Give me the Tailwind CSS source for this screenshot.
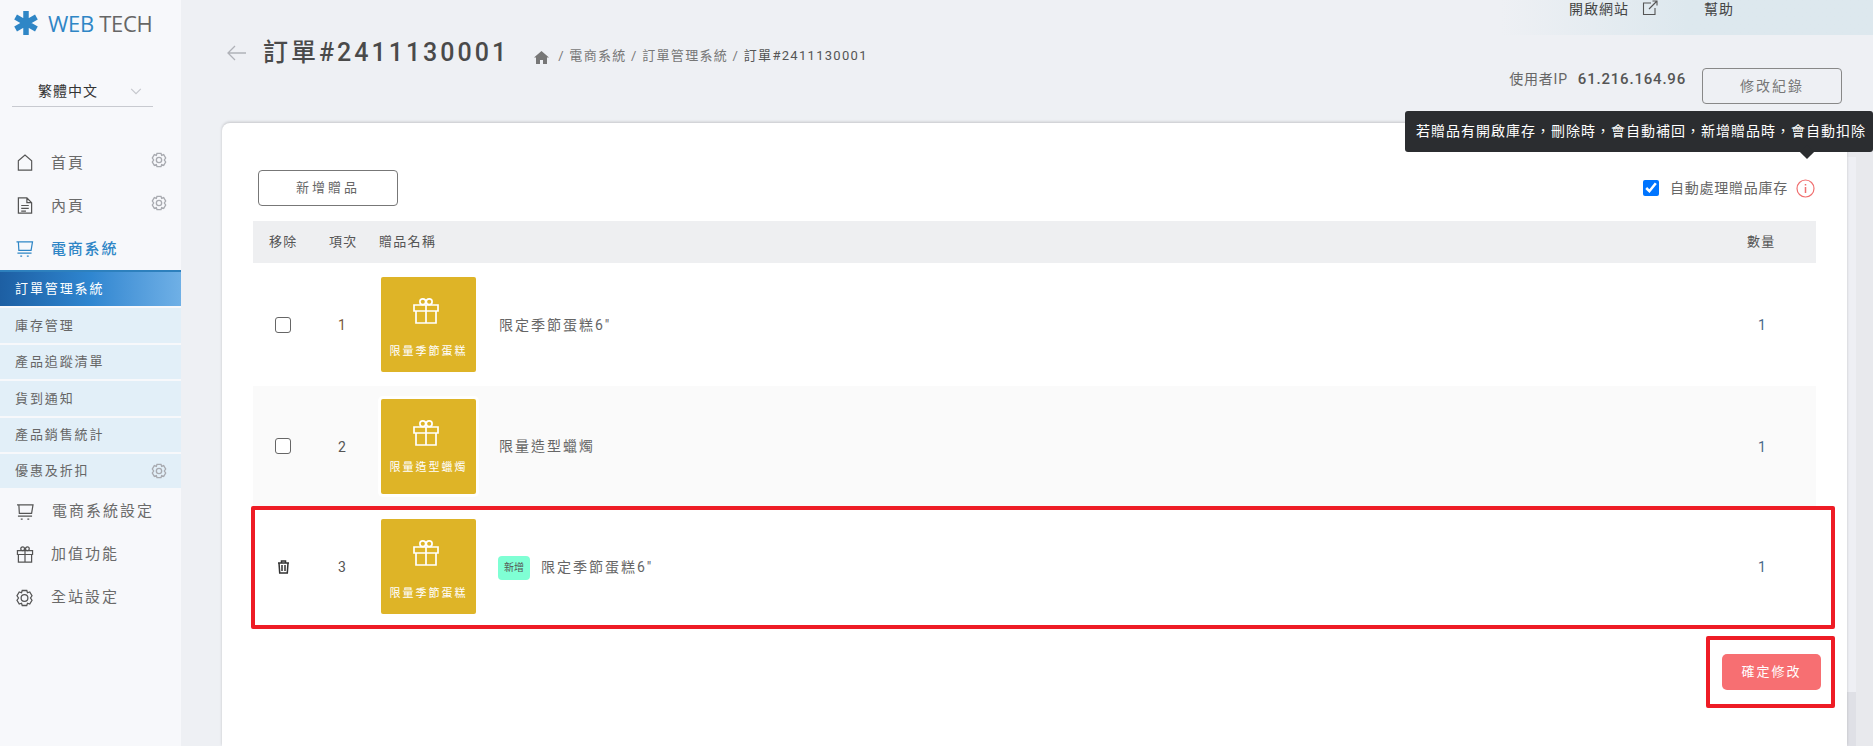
<!DOCTYPE html>
<html lang="zh-Hant">
<head>
<meta charset="utf-8">
<script src="https://cdn.jsdelivr.net/npm/@tailwindcss/browser@4"></script>
</head>
<body class="m-0 h-[746px] w-[1873px] overflow-hidden bg-[#eef0f4] text-[#555] font-['Roboto','Noto_Sans_CJK_TC',sans-serif]">
<div class="flex h-[746px] w-[1873px]">
  <!-- sidebar -->
  <aside class="w-[181px] h-full shrink-0 bg-[#f7f8fb] flex flex-col">
    <div class="h-[46px] pt-[11px] pl-[14px] flex items-start gap-[10px]">
      <svg class="w-[24px] h-[24px]" viewBox="0 0 24 24"><g stroke="#2f86c6" stroke-width="5.500"><path d="M12 0V24M1.600 6L22.400 18M1.600 18L22.400 6"/></g></svg>
      <div class="text-[22px] leading-[24px] font-['Open_Sans',sans-serif] tracking-[-0.3px] whitespace-nowrap"><span class="text-[#2f86c6]">WEB</span> <span class="text-[#666]">TECH</span></div>
    </div>
    <div class="mx-[12px] mt-[29px] h-[32px] border-b border-[#c8cad0] flex items-start justify-between pl-[26px] pr-[11px] w-[141px] pt-[6px]">
      <span class="text-[14px] leading-[20px] tracking-[1px] text-[#333]">繁體中文</span>
      <svg class="w-[12px] h-[7px] mt-[7px]" viewBox="0 0 13 8" fill="none" stroke="#c5c7cc" stroke-width="1.300"><path d="M1 1l5.500 5.500L12 1"/></svg>
    </div>
    <nav class="mt-[35px] flex flex-col">
      <a class="h-[43px] flex items-center pl-[17px] text-[15px] tracking-[2px] text-[#6a6a6a]"><svg class="w-[16px] h-[17px] mr-[18px] -mt-[2px]" viewBox="0 0 18 19" fill="none" stroke="#555" stroke-width="1.300"><path d="M1.500 7.500L9 1l7.500 6.500V18h-15z"/></svg><span class="flex-1">首頁</span><svg class="w-[16px] h-[16px] mr-[14px] -mt-[8px]" viewBox="0 0 24 24" fill="none" stroke="#a8aab0" stroke-width="2"><circle cx="12" cy="12" r="4"/><path d="M9 2h6l1 3 3-1 3 5-2 3 2 3-3 5-3-1-1 3H9l-1-3-3 1-3-5 2-3-2-3 3-5 3 1z"/></svg></a>
      <a class="h-[43px] flex items-center pl-[17px] text-[15px] tracking-[2px] text-[#6a6a6a]"><svg class="w-[16px] h-[17px] mr-[18px] -mt-[2px]" viewBox="0 0 16 18" fill="none" stroke="#555" stroke-width="1.300"><path d="M1 1h9l5 5v11H1zM10 1v5h5M4 9h8M4 12h8M4 15h5"/></svg><span class="flex-1">內頁</span><svg class="w-[16px] h-[16px] mr-[14px] -mt-[8px]" viewBox="0 0 24 24" fill="none" stroke="#a8aab0" stroke-width="2"><circle cx="12" cy="12" r="4"/><path d="M9 2h6l1 3 3-1 3 5-2 3 2 3-3 5-3-1-1 3H9l-1-3-3 1-3-5 2-3-2-3 3-5 3 1z"/></svg></a>
      <a class="h-[43px] flex items-center pl-[15px] text-[15px] tracking-[1.800px] font-medium text-[#2f86c6]"><svg class="w-[19px] h-[16px] mr-[17px] -mt-[2px]" viewBox="0 0 19 17" fill="none" stroke="#2f86c6" stroke-width="1.300"><path d="M1 1h17l-1.500 9H3.500L3 1M2 13h15M5 16h2M12 16h2"/></svg><span>電商系統</span></a>
      <a class="h-[36px] -mt-[1px] flex items-center pl-[15px] text-[13px] tracking-[1.900px] text-white border-t-2 border-[#2d80bd] bg-gradient-to-r from-[#1d5fa3] via-[#2f86d0] to-[#6fb0e6]">訂單管理系統</a>
      <a class="h-[35px] mt-[2px] flex items-center pl-[15px] text-[13px] tracking-[1.900px] text-[#666] bg-[#e2eff8]">庫存管理</a>
      <a class="h-[34px] mt-[2px] flex items-center pl-[15px] text-[13px] tracking-[1.900px] text-[#666] bg-[#e2eff8]">產品追蹤清單</a>
      <a class="h-[35px] mt-[2px] flex items-center pl-[15px] text-[13px] tracking-[1.900px] text-[#666] bg-[#e2eff8]">貨到通知</a>
      <a class="h-[34px] mt-[2px] flex items-center pl-[15px] text-[13px] tracking-[1.900px] text-[#666] bg-[#e2eff8]">產品銷售統計</a>
      <a class="h-[34px] mt-[2px] flex items-center pl-[15px] text-[13px] tracking-[1.900px] text-[#666] bg-[#e2eff8]"><span class="flex-1">優惠及折扣</span><svg class="w-[16px] h-[16px] mr-[14px]" viewBox="0 0 24 24" fill="none" stroke="#a8aab0" stroke-width="2"><circle cx="12" cy="12" r="4"/><path d="M9 2h6l1 3 3-1 3 5-2 3 2 3-3 5-3-1-1 3H9l-1-3-3 1-3-5 2-3-2-3 3-5 3 1z"/></svg></a>
      <a class="h-[43px] mt-[2px] flex items-center pl-[16px] text-[15px] tracking-[2px] text-[#6a6a6a]"><svg class="w-[18px] h-[16px] mr-[18px]" viewBox="0 0 19 17" fill="none" stroke="#555" stroke-width="1.300"><path d="M1 1h17l-1.500 9H3.500L3 1M2 13h15M5 16h2M12 16h2"/></svg><span>電商系統設定</span></a>
      <a class="h-[43px] flex items-center pl-[16px] text-[15px] tracking-[2px] text-[#6a6a6a]"><svg class="w-[18px] h-[17px] mr-[17px]" viewBox="0 0 18 18" fill="none" stroke="#555" stroke-width="1.300"><path d="M1 5h16v4H1zM2 9v8h14V9M9 5v12"/><circle cx="6.500" cy="3" r="2"/><circle cx="11.500" cy="3" r="2"/></svg><span>加值功能</span></a>
      <a class="h-[43px] flex items-center pl-[15px] text-[15px] tracking-[2px] text-[#6a6a6a]"><svg class="w-[19px] h-[18px] mr-[17px]" viewBox="0 0 24 24" fill="none" stroke="#555" stroke-width="1.700"><circle cx="12" cy="12" r="4.500"/><path d="M9 2h6l1 3 3-1 3 5-2 3 2 3-3 5-3-1-1 3H9l-1-3-3 1-3-5 2-3-2-3 3-5 3 1z"/></svg><span>全站設定</span></a>
    </nav>
  </aside>
  <!-- main -->
  <main class="flex-1 relative min-w-0">
    <div class="absolute right-0 top-0 w-[372px] h-[35px] bg-gradient-to-r from-[#eef0f4] via-[#dde8ee] to-[#dde8ee]"></div>
    <div class="relative flex items-start h-[123px]">
      <div class="flex items-center pl-[46px] pt-[41px] h-[65px]">
        <svg class="w-[20px] h-[16px] mr-[16px]" viewBox="0 0 20 16" fill="none" stroke="#b0b2b8" stroke-width="1.300"><path d="M19 8H1M8 1L1 8l7 7"/></svg>
        <h1 class="text-[25px] leading-[28px] font-medium tracking-[3px] text-[#4a4a4a] m-0 whitespace-nowrap">訂單#2411130001</h1>
        <div class="ml-[25px] mt-[5px] flex items-center text-[13px] tracking-[1.300px] text-[#777] whitespace-nowrap">
          <svg class="w-[15px] h-[13px] mr-[9px] mt-[3px]" viewBox="0 0 15 13" fill="#777"><path d="M7.500 0L0 6.500h2V13h4V9h3v4h4V6.500h2z"/></svg>
          <span>/ 電商系統 / 訂單管理系統 / <span class="text-[#555]">訂單#2411130001</span></span>
        </div>
      </div>
      <div class="ml-auto mr-[139px] flex text-[14px] leading-[18px] tracking-[1px] text-[#444] items-start">
        <span class="flex items-center">開啟網站<svg class="w-[16px] h-[16px] ml-[13px] -mt-[2px]" viewBox="0 0 16 16" fill="none" stroke="#555" stroke-width="1.100"><path d="M9 3H1.500v11.500H13V8M7 9l8-8M10.500 1H15v4.500"/></svg></span>
        <span class="ml-[46px]">幫助</span>
      </div>
      <div class="absolute right-[31px] top-[68px] flex items-center">
        <span class="text-[14px] tracking-[0.8px] text-[#666] mr-[10px] -mt-[14px]">使用者IP</span>
        <span class="text-[15px] font-medium tracking-[0.8px] text-[#555] mr-[16px] -mt-[14px]">61.216.164.96</span>
        <button class="w-[140px] h-[36px] rounded-[4px] border border-[#888] text-[14px] tracking-[2px] text-[#777]">修改紀錄</button>
      </div>
    </div>
    <!-- scrollbar strip -->
    <div class="absolute left-[1666px] top-[123px] w-[26px] h-[623px] bg-[#e8e9ed] flex flex-col">
      <div class="w-[9px] h-[34px] bg-[#e8e9ed]"></div>
      <div class="w-[9px] h-[535px] bg-[#eeeff4]"></div>
      <div class="w-[9px] flex-1 bg-[#dfe0e6]"></div>
    </div>
    <section class="absolute left-[41px] top-[123px] w-[1625px] h-[623px] bg-white rounded-tl-[8px] shadow-[0_-1px_3px_rgba(0,0,0,0.18)]">
      <div class="pl-[36px] pr-[33px] pt-[47px]">
        <div class="flex items-center justify-between h-[36px]">
          <button class="w-[140px] h-[36px] rounded-[4px] border border-[#777] text-[13px] tracking-[3px] text-[#666]">新增贈品</button>
          <div class="flex items-center -mr-[1px]">
            <input type="checkbox" checked class="w-[16px] h-[16px] accent-[#0075ff] mr-[11px]">
            <span class="text-[14px] tracking-[0.750px] text-[#666] mr-[8px]">自動處理贈品庫存</span>
            <svg class="w-[19px] h-[19px]" viewBox="0 0 19 19" fill="none" stroke="#f07070" stroke-width="1.200"><circle cx="9.500" cy="9.500" r="8.500"/><path d="M9.500 8v6M9.500 5v1.500" stroke-width="1.500"/></svg>
          </div>
        </div>
        <div class="mt-[15px] w-[1563px] -ml-[5px]">
          <div class="h-[42px] bg-[#eeeff1] flex items-center text-[13px] tracking-[1.300px] text-[#555]">
            <span class="w-[74px] pl-[16px]">移除</span><span class="w-[50px] pl-[2px]">項次</span><span class="flex-1 pl-[2px]">贈品名稱</span><span class="w-[69px]">數量</span>
          </div>
          <!-- row 1 -->
          <div class="h-[123px] flex items-center text-[14px]">
            <div class="w-[60px] pl-[22px]"><div class="w-[16px] h-[16px] rounded-[3px] border border-[#666] bg-white"></div></div>
            <div class="w-[38px] ml-[10px] mt-[2px] text-center text-[14px] text-[#7a5a3a]">1</div>
            <div class="ml-[20px] w-[95px] h-[95px] rounded-[2px] bg-[#deb427] flex flex-col items-center text-white">
              <svg class="w-[26px] h-[26px] mt-[21px] mr-[5px]" viewBox="0 0 26 26" fill="none" stroke="#fff" stroke-width="1.700"><path d="M1 7h24v6H1zM3 13v12h20V13M13 7v18"/><circle cx="9.800" cy="3.800" r="2.900"/><circle cx="16.200" cy="3.800" r="2.900"/></svg>
              <span class="mt-[20px] text-[11px] tracking-[2px] leading-[16px] whitespace-nowrap">限量季節蛋糕</span>
            </div>
            <div class="ml-[23px] mt-[1px] flex-1 text-[#666] tracking-[2px]">限定季節蛋糕6"</div>
            <div class="w-[58px] mt-[2px] -ml-[1px] text-[#4a6a8a]">1</div>
          </div>
          <!-- row 2 -->
          <div class="h-[120px] flex items-center text-[14px] bg-[#fafafa]">
            <div class="w-[60px] pl-[22px]"><div class="w-[16px] h-[16px] rounded-[3px] border border-[#666] bg-white"></div></div>
            <div class="w-[38px] ml-[10px] mt-[2px] text-center text-[14px] text-[#555]">2</div>
            <div class="ml-[20px] w-[95px] h-[95px] rounded-[2px] bg-[#deb427] flex flex-col items-center text-white ring-[3px] ring-white">
              <svg class="w-[26px] h-[26px] mt-[21px] mr-[5px]" viewBox="0 0 26 26" fill="none" stroke="#fff" stroke-width="1.700"><path d="M1 7h24v6H1zM3 13v12h20V13M13 7v18"/><circle cx="9.800" cy="3.800" r="2.900"/><circle cx="16.200" cy="3.800" r="2.900"/></svg>
              <span class="mt-[14px] text-[11px] tracking-[2px] leading-[16px] whitespace-nowrap">限量造型蠟燭</span>
            </div>
            <div class="ml-[23px] mt-[1px] flex-1 text-[#666] tracking-[2px]">限量造型蠟燭</div>
            <div class="w-[58px] mt-[2px] -ml-[1px] text-[#4a6a8a]">1</div>
          </div>
          <!-- row 3 -->
          <div class="h-[121px] flex items-center text-[14px]">
            <div class="w-[60px] pl-[24px] mt-[1px]"><svg class="w-[13px] h-[14px]" viewBox="0 0 13 14" fill="none" stroke="#333" stroke-width="1.500"><path d="M1 3h11M4.500 3V1h4v2M2 3l.700 10h7.600L11 3M5 5v6M8 5v6"/></svg></div>
            <div class="w-[38px] ml-[10px] mt-[2px] text-center text-[14px] text-[#555]">3</div>
            <div class="ml-[20px] w-[95px] h-[95px] rounded-[2px] bg-[#deb427] flex flex-col items-center text-white">
              <svg class="w-[26px] h-[26px] mt-[21px] mr-[5px]" viewBox="0 0 26 26" fill="none" stroke="#fff" stroke-width="1.700"><path d="M1 7h24v6H1zM3 13v12h20V13M13 7v18"/><circle cx="9.800" cy="3.800" r="2.900"/><circle cx="16.200" cy="3.800" r="2.900"/></svg>
              <span class="mt-[20px] text-[11px] tracking-[2px] leading-[16px] whitespace-nowrap">限量季節蛋糕</span>
            </div>
            <div class="ml-[22px] mt-[1px] flex-1 flex items-center text-[#666] tracking-[2px]">
              <span class="w-[32px] h-[24px] rounded-[4px] bg-[#7fffd4] text-[10px] tracking-[0] text-[#555] flex items-center justify-center mr-[11px] mt-[1px]">新增</span>限定季節蛋糕6"
            </div>
            <div class="w-[58px] mt-[2px] -ml-[1px] text-[#4a6a8a]">1</div>
          </div>
        </div>
      </div>
      <!-- highlight annotations -->
      <div class="absolute left-[29px] top-[383px] w-[1584px] h-[123px] border-[4px] border-[#ee1c25] rounded-[2px]"></div>
      <div class="absolute left-[1484px] top-[513px] w-[129px] h-[72px] border-[4px] border-[#ee1c25] rounded-[2px] flex items-center justify-center">
        <button class="w-[99px] h-[36px] ml-[2px] rounded-[5px] bg-[#f76f72] text-white text-[13px] tracking-[2px]">確定修改</button>
      </div>
      <!-- tooltip -->
      <div class="absolute left-[1183px] top-[-12px] h-[41px] w-[468px] bg-[#2b2d30] rounded-[3px] text-white text-[14px] tracking-[1px] flex items-center pl-[11px] whitespace-nowrap">若贈品有開啟庫存，刪除時，會自動補回，新增贈品時，會自動扣除
        <span class="absolute right-[61px] -bottom-[5px] w-[10px] h-[10px] bg-[#2b2d30] rotate-45"></span>
      </div>
    </section>
  </main>
</div>
</body>
</html>
